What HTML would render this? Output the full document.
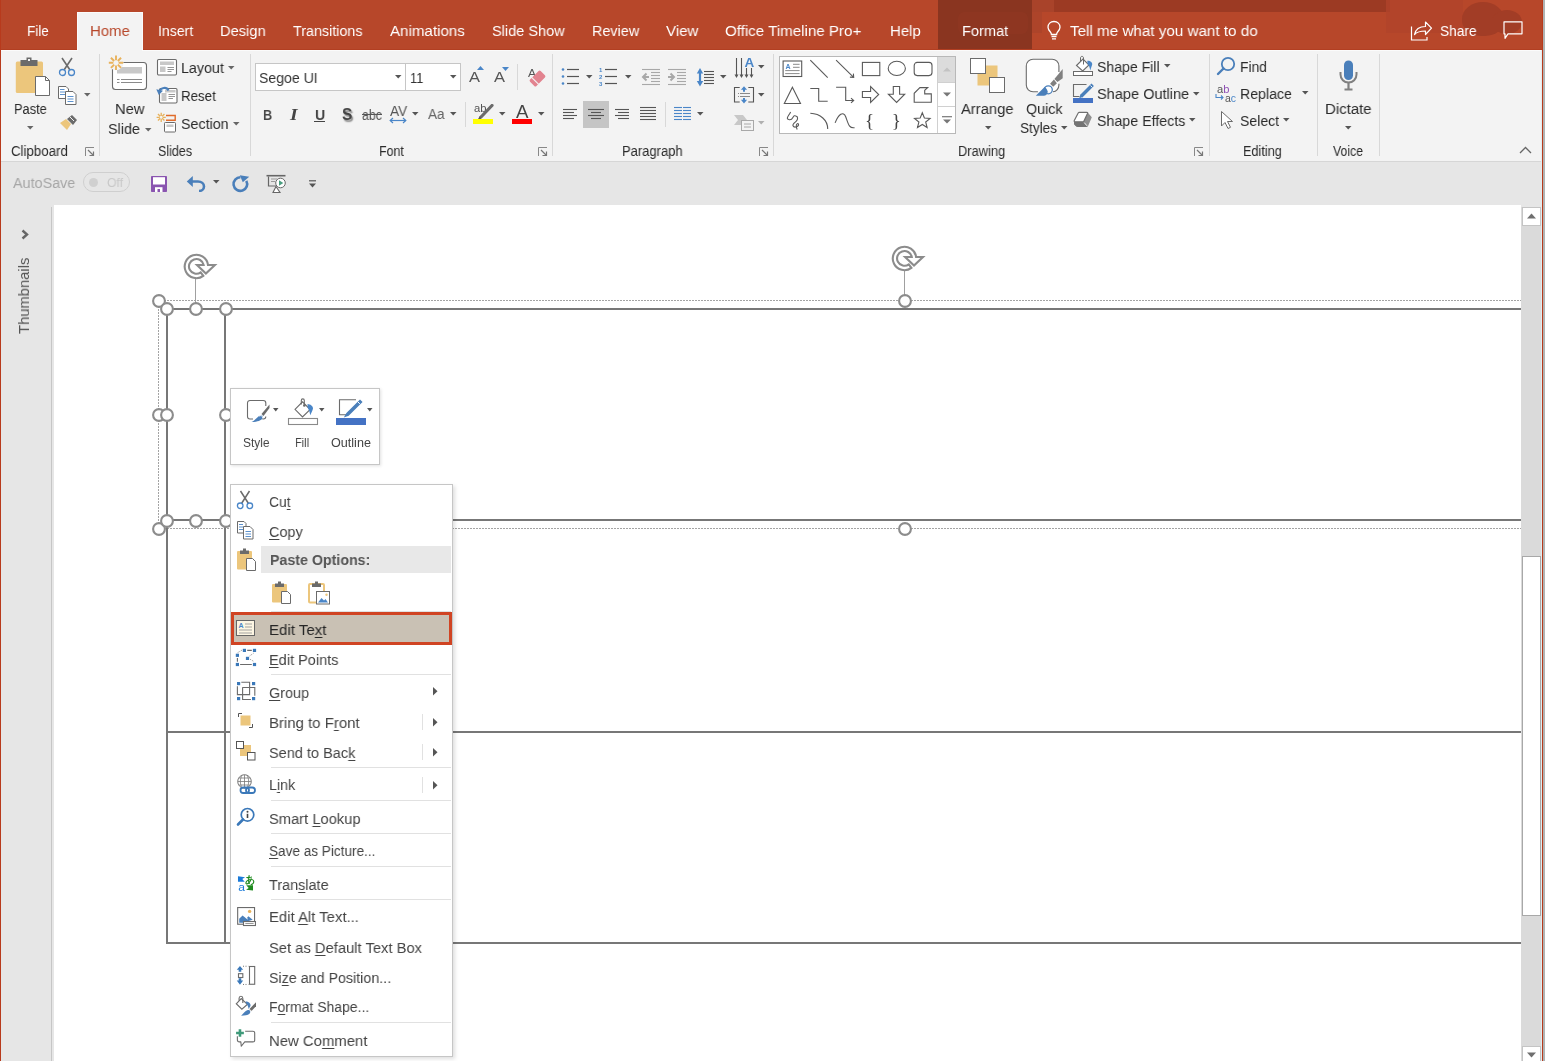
<!DOCTYPE html>
<html><head><meta charset="utf-8">
<style>
*{box-sizing:border-box}
html,body{margin:0;padding:0}
body{width:1545px;height:1061px;overflow:hidden;position:relative;background:#fff;font-family:"Liberation Sans",sans-serif;color:#3b3b3b}
.a{position:absolute;display:block}
.t{position:absolute;white-space:nowrap;line-height:1;will-change:transform}
u{text-decoration:none;border-bottom:1px solid currentColor;display:inline-block;line-height:0.95}
</style></head><body>
<div class="a" style="left:0px;top:0px;width:1545px;height:50px;background:#b7472a;"></div>
<div class="a" style="left:1054px;top:0px;width:336px;height:12px;background:#9c3a23;"></div>
<div class="a" style="left:1032px;top:0px;width:22px;height:12px;background:#a9432a;"></div>
<div class="a" style="left:1032px;top:12px;width:10px;height:21px;background:#ad442a;"></div>
<div class="a" style="left:938px;top:0px;width:94px;height:50px;background:#8a3520;"></div>
<div class="a" style="left:958px;top:12px;width:70px;height:22px;background:#8e3722;border-radius:6px;opacity:.8"></div>
<div class="a" style="left:1386px;top:0px;width:77px;height:33px;background:#b0442a;opacity:.8"></div>
<div class="a" style="left:1462px;top:2px;width:42px;height:34px;background:#a23d26;border-radius:50% 50% 45% 45%"></div>
<div class="a" style="left:1492px;top:10px;width:30px;height:24px;background:#a23d26;border-radius:50%"></div>
<div class="a" style="left:1480px;top:18px;width:30px;height:14px;background:#a23d26;"></div>
<div class="a" style="left:77px;top:12px;width:66px;height:38px;background:#f3f3f3;border:1px solid #fafafa;border-bottom:none"></div>
<div class="t" style="left:26.80px;top:23px;font-size:15.5px;color:#ffffff;transform:scaleX(0.8722);transform-origin:0 0;">File</div>
<div class="t" style="left:89.80px;top:23px;font-size:15.5px;color:#b7472a;transform:scaleX(0.9626);transform-origin:0 0;">Home</div>
<div class="t" style="left:157.60px;top:23px;font-size:15.5px;color:#ffffff;transform:scaleX(0.9084);transform-origin:0 0;">Insert</div>
<div class="t" style="left:220.30px;top:23px;font-size:15.5px;color:#ffffff;transform:scaleX(0.9452);transform-origin:0 0;">Design</div>
<div class="t" style="left:293.40px;top:23px;font-size:15.5px;color:#ffffff;transform:scaleX(0.9240);transform-origin:0 0;">Transitions</div>
<div class="t" style="left:390.20px;top:23px;font-size:15.5px;color:#ffffff;transform:scaleX(0.9754);transform-origin:0 0;">Animations</div>
<div class="t" style="left:492.20px;top:23px;font-size:15.5px;color:#ffffff;transform:scaleX(0.9384);transform-origin:0 0;">Slide Show</div>
<div class="t" style="left:591.80px;top:23px;font-size:15.5px;color:#ffffff;transform:scaleX(0.9277);transform-origin:0 0;">Review</div>
<div class="t" style="left:666.00px;top:23px;font-size:15.5px;color:#ffffff;transform:scaleX(0.9741);transform-origin:0 0;">View</div>
<div class="t" style="left:724.70px;top:23px;font-size:15.5px;color:#ffffff;transform:scaleX(0.9757);transform-origin:0 0;">Office Timeline Pro+</div>
<div class="t" style="left:889.60px;top:23px;font-size:15.5px;color:#ffffff;transform:scaleX(0.9658);transform-origin:0 0;">Help</div>
<div class="t" style="left:961.60px;top:23px;font-size:15.5px;color:#ffffff;transform:scaleX(0.9410);transform-origin:0 0;">Format</div>
<div class="t" style="left:1069.80px;top:23px;font-size:15.5px;color:#ffffff;transform:scaleX(0.9813);transform-origin:0 0;">Tell me what you want to do</div>
<div class="t" style="left:1440.30px;top:23px;font-size:15.5px;color:#ffffff;transform:scaleX(0.8852);transform-origin:0 0;">Share</div>
<svg class="a" style="left:1046px;top:20px;" width="15.5" height="22" viewBox="0 0 15.5 22"><path d="M8 1.5C4.4 1.5 2 4 2 7.2c0 2.2 1.3 3.6 2.4 4.8.7.8 1 1.6 1 2.5h5.2c0-.9.3-1.7 1-2.5 1.1-1.2 2.4-2.6 2.4-4.8C14 4 11.6 1.5 8 1.5z" fill="none" stroke="#fff" stroke-width="1.3"/><path d="M5.5 16.5h5M6 18.8h4" stroke="#fff" stroke-width="1.3"/></svg>
<svg class="a" style="left:1410px;top:20px;" width="23" height="21" viewBox="0 0 23 21"><path d="M1.5 6.5v13.5h15.5v-3" fill="none" stroke="#fff" stroke-width="1.2"/><path d="M4.5 14.5c1-5 5-8 11-8V2l6 6.2-6 6.3V11c-4.5 0-8.5.8-11 3.5z" fill="none" stroke="#fff" stroke-width="1.2" stroke-linejoin="round"/></svg>
<svg class="a" style="left:1503px;top:21px;" width="20" height="19" viewBox="0 0 20 19"><path d="M1 .8h18v12H5l-3 4.5v-4.5H1z" fill="none" stroke="#fff" stroke-width="1.2" stroke-linejoin="round"/></svg>
<div class="a" style="left:0px;top:0px;width:1px;height:1061px;background:#b83a1c;"></div>
<div class="a" style="left:1px;top:50px;width:1541px;height:111px;background:#f3f3f3;"></div>
<div class="a" style="left:1px;top:50px;width:76px;height:1px;background:#fbfbfb;"></div>
<div class="a" style="left:143px;top:50px;width:1398px;height:1px;background:#fbfbfb;"></div>
<div class="a" style="left:1px;top:49px;width:76px;height:1px;background:#b23f22;"></div>
<div class="a" style="left:143px;top:49px;width:1399px;height:1px;background:#b23f22;"></div>
<div class="a" style="left:77px;top:12px;width:66px;height:39px;background:#f3f3f3;border:1px solid #fbfbfb;border-bottom:none"></div>
<div class="t" style="left:89.80px;top:23px;font-size:15.5px;color:#b7472a;transform:scaleX(0.9626);transform-origin:0 0;">Home</div>
<div class="a" style="left:1px;top:161px;width:1541px;height:1px;background:#d6d6d6;"></div>
<div class="a" style="left:99px;top:54px;width:1px;height:102px;background:#d8d8d8;"></div>
<div class="a" style="left:250px;top:54px;width:1px;height:102px;background:#d8d8d8;"></div>
<div class="a" style="left:552px;top:54px;width:1px;height:102px;background:#d8d8d8;"></div>
<div class="a" style="left:773px;top:54px;width:1px;height:102px;background:#d8d8d8;"></div>
<div class="a" style="left:1209px;top:54px;width:1px;height:102px;background:#d8d8d8;"></div>
<div class="a" style="left:1317px;top:54px;width:1px;height:102px;background:#d8d8d8;"></div>
<div class="a" style="left:1379px;top:54px;width:1px;height:102px;background:#d8d8d8;"></div>
<div class="t" style="left:11.40px;top:144px;font-size:14px;color:#2b2b2b;transform:scaleX(0.9479);transform-origin:0 0;">Clipboard</div>
<div class="t" style="left:158.00px;top:144px;font-size:14px;color:#2b2b2b;transform:scaleX(0.8920);transform-origin:0 0;">Slides</div>
<div class="t" style="left:379.10px;top:144px;font-size:14px;color:#2b2b2b;transform:scaleX(0.8893);transform-origin:0 0;">Font</div>
<div class="t" style="left:622.00px;top:144px;font-size:14px;color:#2b2b2b;transform:scaleX(0.9284);transform-origin:0 0;">Paragraph</div>
<div class="t" style="left:957.70px;top:144px;font-size:14px;color:#2b2b2b;transform:scaleX(0.9212);transform-origin:0 0;">Drawing</div>
<div class="t" style="left:1243.40px;top:144px;font-size:14px;color:#2b2b2b;transform:scaleX(0.9064);transform-origin:0 0;">Editing</div>
<div class="t" style="left:1333.30px;top:144px;font-size:14px;color:#2b2b2b;transform:scaleX(0.8755);transform-origin:0 0;">Voice</div>
<svg class="a" style="left:85px;top:147px;" width="10" height="10" viewBox="0 0 10 10"><path d="M.5 9V.5H9" fill="none" stroke="#888" stroke-width="1"/><path d="M3 3l5.5 5.5M4.5 8.5h4v-4" fill="none" stroke="#777" stroke-width="1.2"/></svg>
<svg class="a" style="left:538px;top:147px;" width="10" height="10" viewBox="0 0 10 10"><path d="M.5 9V.5H9" fill="none" stroke="#888" stroke-width="1"/><path d="M3 3l5.5 5.5M4.5 8.5h4v-4" fill="none" stroke="#777" stroke-width="1.2"/></svg>
<svg class="a" style="left:759px;top:147px;" width="10" height="10" viewBox="0 0 10 10"><path d="M.5 9V.5H9" fill="none" stroke="#888" stroke-width="1"/><path d="M3 3l5.5 5.5M4.5 8.5h4v-4" fill="none" stroke="#777" stroke-width="1.2"/></svg>
<svg class="a" style="left:1194px;top:147px;" width="10" height="10" viewBox="0 0 10 10"><path d="M.5 9V.5H9" fill="none" stroke="#888" stroke-width="1"/><path d="M3 3l5.5 5.5M4.5 8.5h4v-4" fill="none" stroke="#777" stroke-width="1.2"/></svg>
<svg class="a" style="left:14px;top:57px;" width="38" height="40" viewBox="0 0 38 40"><rect x="1.8" y="4.5" width="27.2" height="31.5" rx="1.5" fill="#ecc67c"/><path d="M6.5 3h17v6h-17z" fill="#6b6b6b"/><rect x="12.5" y="0.5" width="5" height="4" fill="#6b6b6b"/><rect x="14" y="2" width="2" height="2" fill="#f3f3f3"/><path d="M21.5 19.5h10l4 4v15h-14z" fill="#fff" stroke="#6b6b6b" stroke-width="1"/><path d="M31.5 19.5v4h4" fill="none" stroke="#6b6b6b"/></svg>
<div class="t" style="left:13.50px;top:101px;font-size:15.5px;color:#2b2b2b;transform:scaleX(0.8274);transform-origin:0 0;">Paste</div>
<svg class="a" style="left:26.75px;top:126.20px" width="7.5" height="4.6" viewBox="0 0 7.5 4.6"><path d="M0 0H6.5L3.25 3.6Z" fill="#666"/></svg>
<svg class="a" style="left:58px;top:57px;" width="18" height="20" viewBox="0 0 18 20"><path d="M4 1l8 12M14 1L6 13" stroke="#6b6b6b" stroke-width="1.6"/><circle cx="4.5" cy="15.5" r="3" fill="none" stroke="#4a86c8" stroke-width="1.3"/><circle cx="13.5" cy="15.5" r="3" fill="none" stroke="#4a86c8" stroke-width="1.3"/></svg>
<svg class="a" style="left:58px;top:85px;" width="19" height="20" viewBox="0 0 19 20"><path d="M.5 1.5h7.5l2.5 2.5v9.5h-10z" fill="#fff" stroke="#6b6b6b"/><path d="M7.5 6.5h7.5l3 3v10h-10.5z" fill="#fff" stroke="#6b6b6b"/><path d="M2 4.5h4.5M2 7h5M2 9.5h5M9.5 11.5h6M9.5 14h6M9.5 16.5h6" stroke="#4a86c8" stroke-width=".9"/></svg>
<svg class="a" style="left:83.75px;top:93.20px" width="7.5" height="4.6" viewBox="0 0 7.5 4.6"><path d="M0 0H6.5L3.25 3.6Z" fill="#666"/></svg>
<svg class="a" style="left:59px;top:114px;" width="19" height="17" viewBox="0 0 19 17"><path d="M1 9l6-4 5 5-4 6z" fill="#ecc67c"/><path d="M8 5l5-4 5 5-4 5z" fill="#6b6b6b"/><path d="M11 3l4 4" stroke="#f3f3f3" stroke-width="1"/></svg>
<svg class="a" style="left:107px;top:54px;" width="42" height="38" viewBox="0 0 42 38"><rect x="5.5" y="8.5" width="34" height="27" rx="3" fill="#fff" stroke="#6b6b6b" stroke-width="1.1"/><rect x="10" y="13" width="25" height="6.5" fill="#c8c8c8"/><path d="M10 25.5h2.5M14 25.5h21M10 28.5h2.5M14 28.5h21" stroke="#8a8a8a" stroke-width="1"/><circle cx="9" cy="8.8" r="7.5" fill="#f3f3f3"/><path d="M11.60 8.80L16.20 8.80M10.84 10.64L14.09 13.89M9.00 11.40L9.00 16.00M7.16 10.64L3.91 13.89M6.40 8.80L1.80 8.80M7.16 6.96L3.91 3.71M9.00 6.20L9.00 1.60M10.84 6.96L14.09 3.71" stroke="#e8b25c" stroke-width="1.9"/></svg>
<div class="t" style="left:114.50px;top:101px;font-size:15.5px;color:#2b2b2b;transform:scaleX(0.9504);transform-origin:0 0;">New</div>
<div class="t" style="left:107.70px;top:121px;font-size:15.5px;color:#2b2b2b;transform:scaleX(0.9289);transform-origin:0 0;">Slide</div>
<svg class="a" style="left:144.75px;top:128.20px" width="7.5" height="4.6" viewBox="0 0 7.5 4.6"><path d="M0 0H6.5L3.25 3.6Z" fill="#666"/></svg>
<svg class="a" style="left:156px;top:58px;" width="22" height="19" viewBox="0 0 22 19"><rect x="1.5" y="1.5" width="19" height="15.5" rx="1.2" fill="#fff" stroke="#6b6b6b" stroke-width="1.1"/><rect x="4" y="3.5" width="14" height="3.5" fill="#c8c8c8"/><rect x="4" y="8.5" width="5.5" height="5.5" fill="#c8c8c8"/><path d="M11.5 9.5h6.5M11.5 11.5h6.5M11.5 13.5h4" stroke="#8a8a8a" stroke-width=".9"/></svg>
<div class="t" style="left:181.00px;top:60px;font-size:15.5px;color:#2b2b2b;transform:scaleX(0.9218);transform-origin:0 0;">Layout</div>
<svg class="a" style="left:227.75px;top:66.20px" width="7.5" height="4.6" viewBox="0 0 7.5 4.6"><path d="M0 0H6.5L3.25 3.6Z" fill="#666"/></svg>
<svg class="a" style="left:156px;top:84px;" width="22" height="20" viewBox="0 0 22 20"><rect x="3.5" y="4.5" width="17.5" height="14.5" rx="1.2" fill="#fff" stroke="#6b6b6b" stroke-width="1.1"/><rect x="5.5" y="9" width="5" height="8" fill="#c8c8c8"/><path d="M12.5 10.5h6.5M12.5 12.5h6.5M12.5 14.5h4.5" stroke="#8a8a8a" stroke-width=".9"/><rect x="9" y="6" width="10.5" height="2.5" fill="#c8c8c8"/><path d="M3.5 7.5C5 3.5 10.5 2.5 12.5 6.5" fill="none" stroke="#4a7fba" stroke-width="2.2"/><path d="M0.3 5.3L2.8 11 7 6.8z" fill="#4a7fba"/></svg>
<div class="t" style="left:181.00px;top:88px;font-size:15.5px;color:#2b2b2b;transform:scaleX(0.8594);transform-origin:0 0;">Reset</div>
<svg class="a" style="left:155px;top:112px;" width="23" height="21" viewBox="0 0 23 21"><path d="M7.60 5.30L10.80 5.30M7.19 6.29L9.45 8.55M6.20 6.70L6.20 9.90M5.21 6.29L2.95 8.55M4.80 5.30L1.60 5.30M5.21 4.31L2.95 2.05M6.20 3.90L6.20 0.70M7.19 4.31L9.45 2.05" stroke="#e8b25c" stroke-width="1.3"/><path d="M11 3.5h9.2v4.8H11" fill="none" stroke="#e06b2a" stroke-width="1.4"/><rect x="9.5" y="10.5" width="11" height="9.5" rx=".8" fill="#fff" stroke="#6b6b6b" stroke-width="1"/><rect x="11.5" y="12.5" width="7" height="2.5" fill="#c8c8c8"/></svg>
<div class="t" style="left:181.00px;top:116px;font-size:15.5px;color:#2b2b2b;transform:scaleX(0.9208);transform-origin:0 0;">Section</div>
<svg class="a" style="left:233.25px;top:121.70px" width="7.5" height="4.6" viewBox="0 0 7.5 4.6"><path d="M0 0H6.5L3.25 3.6Z" fill="#666"/></svg>
<div class="a" style="left:255px;top:63px;width:151px;height:28px;background:#fff;border:1px solid #c6c6c6"></div>
<div class="a" style="left:405px;top:63px;width:56px;height:28px;background:#fff;border:1px solid #c6c6c6"></div>
<div class="t" style="left:258.50px;top:70px;font-size:15.5px;color:#333;transform:scaleX(0.9082);transform-origin:0 0;">Segoe UI</div>
<div class="t" style="left:410.30px;top:70px;font-size:15.5px;color:#333;transform:scaleX(0.8271);transform-origin:0 0;">11</div>
<svg class="a" style="left:394.75px;top:75.20px" width="7.5" height="4.6" viewBox="0 0 7.5 4.6"><path d="M0 0H6.5L3.25 3.6Z" fill="#555"/></svg>
<svg class="a" style="left:449.75px;top:75.20px" width="7.5" height="4.6" viewBox="0 0 7.5 4.6"><path d="M0 0H6.5L3.25 3.6Z" fill="#555"/></svg>
<div class="t" style="left:469.00px;top:69px;font-size:15.5px;color:#555;transform:scaleX(1.0632);transform-origin:0 0;">A</div>
<svg class="a" style="left:477px;top:66px;" width="7" height="4" viewBox="0 0 7 4"><path d="M0 4L3.5 0 7 4z" fill="#4a86c8"/></svg>
<div class="t" style="left:494.00px;top:69px;font-size:15.5px;color:#555;transform:scaleX(1.0632);transform-origin:0 0;">A</div>
<svg class="a" style="left:502px;top:67px;" width="7" height="4" viewBox="0 0 7 4"><path d="M0 0h7L3.5 4z" fill="#4a86c8"/></svg>
<div class="a" style="left:517px;top:64px;width:1px;height:26px;background:#d8d8d8;"></div>
<div class="t" style="left:527.50px;top:68px;font-size:11px;color:#555;transform:scaleX(1.0895);transform-origin:0 0;">A</div>
<svg class="a" style="left:527px;top:68px;" width="20" height="20" viewBox="0 0 20 20"><g transform="rotate(-45 10.5 10.5)"><rect x="3" y="6" width="15" height="9" rx="1.5" fill="#e2838f"/><path d="M7.2 5.5v10" stroke="#f3f3f3" stroke-width="1.1"/></g></svg>
<div class="t" style="left:262.60px;top:107px;font-size:15.5px;color:#444;transform:scaleX(0.8215);transform-origin:0 0;font-weight:bold;">B</div>
<div class="t" style="left:290px;top:105.5px;font-size:17px;color:#444;font-family:'Liberation Serif';font-style:italic;font-weight:bold;transform:scaleX(1.15);transform-origin:0 0;">I</div>
<div class="t" style="left:314.60px;top:107px;font-size:15.5px;color:#444;transform:scaleX(0.9108);transform-origin:0 0;font-weight:bold;">U</div>
<div class="a" style="left:314px;top:121px;width:11px;height:1.3px;background:#444;"></div>
<div class="t" style="left:341.70px;top:106px;font-size:17px;color:#444;text-shadow:1.5px 1.5px 1.5px rgba(0,0,0,.45);transform:scaleX(0.9077);transform-origin:0 0;font-weight:bold;">S</div>
<div class="t" style="left:362.00px;top:108px;font-size:14px;color:#555;transform:scaleX(0.8859);transform-origin:0 0;">abc</div>
<div class="a" style="left:362px;top:114px;width:20px;height:1.3px;background:#555;"></div>
<div class="t" style="left:389.50px;top:104px;font-size:14px;color:#555;transform:scaleX(0.9751);transform-origin:0 0;">AV</div>
<svg class="a" style="left:389px;top:117px;" width="18" height="7" viewBox="0 0 18 7"><path d="M1.5 3.5h15" stroke="#4a86c8" stroke-width="1.2"/><path d="M4 1L1.2 3.5 4 6M14 1l2.8 2.5L14 6" fill="none" stroke="#4a86c8" stroke-width="1.2"/></svg>
<svg class="a" style="left:411.75px;top:112.20px" width="7.5" height="4.6" viewBox="0 0 7.5 4.6"><path d="M0 0H6.5L3.25 3.6Z" fill="#555"/></svg>
<div class="t" style="left:428.00px;top:106px;font-size:15.5px;color:#666;transform:scaleX(0.8743);transform-origin:0 0;">Aa</div>
<svg class="a" style="left:449.75px;top:112.20px" width="7.5" height="4.6" viewBox="0 0 7.5 4.6"><path d="M0 0H6.5L3.25 3.6Z" fill="#555"/></svg>
<div class="a" style="left:465px;top:102px;width:1px;height:25px;background:#d8d8d8;"></div>
<div class="t" style="left:473.50px;top:103px;font-size:11px;color:#555;transform:scaleX(1.0215);transform-origin:0 0;">ab</div>
<svg class="a" style="left:476px;top:104px;" width="18" height="15.5" viewBox="0 0 18 15.5"><path d="M16 1.5L5 13" stroke="#6b6b6b" stroke-width="3.2" stroke-linecap="round"/><path d="M4 12l-2 3h3z" fill="#555"/></svg>
<div class="a" style="left:473px;top:119px;width:20px;height:5px;background:#ffff00;"></div>
<svg class="a" style="left:498.75px;top:112.20px" width="7.5" height="4.6" viewBox="0 0 7.5 4.6"><path d="M0 0H6.5L3.25 3.6Z" fill="#555"/></svg>
<div class="t" style="left:515.70px;top:103px;font-size:18px;color:#444;transform:scaleX(1.0404);transform-origin:0 0;">A</div>
<div class="a" style="left:512px;top:119px;width:20px;height:5px;background:#ff0000;"></div>
<svg class="a" style="left:537.75px;top:112.20px" width="7.5" height="4.6" viewBox="0 0 7.5 4.6"><path d="M0 0H6.5L3.25 3.6Z" fill="#555"/></svg>
<svg class="a" style="left:560px;top:66px;" width="22" height="20" viewBox="0 0 22 20"><circle cx="3" cy="3.5" r="1.3" fill="#4a86c8"/><circle cx="3" cy="10.5" r="1.3" fill="#4a86c8"/><circle cx="3" cy="17.5" r="1.3" fill="#4a86c8"/><path d="M7 3.5h12" stroke="#555" stroke-width="1.2"/><path d="M7 10.5h12" stroke="#555" stroke-width="1.2"/><path d="M7 17.5h12" stroke="#555" stroke-width="1.2"/></svg>
<svg class="a" style="left:585.75px;top:75.20px" width="7.5" height="4.6" viewBox="0 0 7.5 4.6"><path d="M0 0H6.5L3.25 3.6Z" fill="#555"/></svg>
<svg class="a" style="left:598px;top:66px;" width="22" height="20" viewBox="0 0 22 20"><text x="1" y="6" font-size="6" fill="#4a86c8" font-family="Liberation Sans" font-weight="bold">1</text><text x="1" y="13" font-size="6" fill="#4a86c8" font-family="Liberation Sans" font-weight="bold">2</text><text x="1" y="20" font-size="6" fill="#4a86c8" font-family="Liberation Sans" font-weight="bold">3</text><path d="M7 3.5h12" stroke="#555" stroke-width="1.2"/><path d="M7 10.5h12" stroke="#555" stroke-width="1.2"/><path d="M7 17.5h12" stroke="#555" stroke-width="1.2"/></svg>
<svg class="a" style="left:624.75px;top:75.20px" width="7.5" height="4.6" viewBox="0 0 7.5 4.6"><path d="M0 0H6.5L3.25 3.6Z" fill="#555"/></svg>
<svg class="a" style="left:0px;top:0px;" width="730" height="95" viewBox="0 0 730 95"><path d="M642 69.5H660" stroke="#a8a8a8" stroke-width="1.1"/><path d="M668 69.5H686" stroke="#a8a8a8" stroke-width="1.1"/><path d="M642 84.5H660" stroke="#a8a8a8" stroke-width="1.1"/><path d="M668 84.5H686" stroke="#a8a8a8" stroke-width="1.1"/><path d="M651 72.5H660" stroke="#a8a8a8" stroke-width="1.1"/><path d="M677 72.5H686" stroke="#a8a8a8" stroke-width="1.1"/><path d="M651 75.5H660" stroke="#a8a8a8" stroke-width="1.1"/><path d="M677 75.5H686" stroke="#a8a8a8" stroke-width="1.1"/><path d="M651 78.5H660" stroke="#a8a8a8" stroke-width="1.1"/><path d="M677 78.5H686" stroke="#a8a8a8" stroke-width="1.1"/><path d="M651 81.5H660" stroke="#a8a8a8" stroke-width="1.1"/><path d="M677 81.5H686" stroke="#a8a8a8" stroke-width="1.1"/><path d="M649 77H643.5M646.5 73.5L643 77l3.5 3.5" fill="none" stroke="#a8a8a8" stroke-width="2"/><path d="M668 77h5.5M670.5 73.5L674 77l-3.5 3.5" fill="none" stroke="#a8a8a8" stroke-width="2"/><path d="M700 71.5V83" stroke="#4a86c8" stroke-width="2.2"/><path d="M696.8 73.5L700 68l3.2 5.5zM696.8 81L700 86.5l3.2-5.5z" fill="#4a86c8"/><path d="M704 71.5H714" stroke="#555" stroke-width="1.1"/><path d="M704 74.5H714" stroke="#555" stroke-width="1.1"/><path d="M704 77.5H714" stroke="#555" stroke-width="1.1"/><path d="M704 80.5H714" stroke="#555" stroke-width="1.1"/><path d="M704 83.5H714" stroke="#555" stroke-width="1.1"/></svg>
<svg class="a" style="left:719.75px;top:75.20px" width="7.5" height="4.6" viewBox="0 0 7.5 4.6"><path d="M0 0H6.5L3.25 3.6Z" fill="#555"/></svg>
<svg class="a" style="left:0px;top:0px;" width="775" height="135" viewBox="0 0 775 135"><path d="M736.5 58V75" stroke="#555" stroke-width="1.1"/><path d="M734.5 74.5L736.5 78L738.5 74.5z" fill="#555"/><path d="M741.5 58V75" stroke="#555" stroke-width="1.1"/><path d="M739.5 74.5L741.5 78L743.5 74.5z" fill="#555"/><path d="M746.5 68V75" stroke="#555" stroke-width="1.1"/><path d="M744.5 74.5L746.5 78L748.5 74.5z" fill="#555"/><path d="M751.5 68V75" stroke="#555" stroke-width="1.1"/><path d="M749.5 74.5L751.5 78L753.5 74.5z" fill="#555"/><text x="744.6" y="67" font-size="13.5" font-weight="bold" fill="#4a86c8" font-family="Liberation Sans">A</text></svg>
<svg class="a" style="left:757.75px;top:65.20px" width="7.5" height="4.6" viewBox="0 0 7.5 4.6"><path d="M0 0H6.5L3.25 3.6Z" fill="#555"/></svg>
<svg class="a" style="left:0px;top:0px;" width="775" height="135" viewBox="0 0 775 135"><path d="M739.7 87.5H734.5V102H739.7M748.3 87.5H753.5V102H748.3" fill="none" stroke="#555" stroke-width="1.1"/><path d="M740 93.5H750M740 96.5H750" stroke="#8a8a8a" stroke-width="1"/><path d="M738 93.5h1M738 96.5h1" stroke="#8a8a8a" stroke-width="1"/><path d="M744 89V91.8M744 98V100.8" stroke="#4a86c8" stroke-width="2"/><path d="M740.9 89.8L744 86.2L747.1 89.8zM740.9 99.8L744 103.4L747.1 99.8z" fill="#4a86c8"/></svg>
<svg class="a" style="left:757.75px;top:93.20px" width="7.5" height="4.6" viewBox="0 0 7.5 4.6"><path d="M0 0H6.5L3.25 3.6Z" fill="#555"/></svg>
<svg class="a" style="left:733px;top:114px;" width="22" height="18" viewBox="0 0 22 18"><path d="M1 1h9l4 5-4 5H1l4-5z" fill="#c8c8c8"/><rect x="8.5" y="6.5" width="12" height="10" fill="#f3f3f3" stroke="#a8a8a8"/><path d="M11 10h7M11 13h7" stroke="#a8a8a8"/></svg>
<svg class="a" style="left:757.75px;top:121.20px" width="7.5" height="4.6" viewBox="0 0 7.5 4.6"><path d="M0 0H6.5L3.25 3.6Z" fill="#b0b0b0"/></svg>
<svg class="a" style="left:0px;top:0px;" width="720" height="130" viewBox="0 0 720 130"><path d="M563 109.5H577" stroke="#555" stroke-width="1.1"/><path d="M563 112.5H574" stroke="#555" stroke-width="1.1"/><path d="M563 115.5H577" stroke="#555" stroke-width="1.1"/><path d="M563 118.5H574" stroke="#555" stroke-width="1.1"/></svg>
<div class="a" style="left:583px;top:101px;width:26px;height:27px;background:#c5c5c5;"></div>
<svg class="a" style="left:0px;top:0px;" width="720" height="130" viewBox="0 0 720 130"><path d="M588 109.5H604" stroke="#555" stroke-width="1.1"/><path d="M591 112.5H601" stroke="#555" stroke-width="1.1"/><path d="M588 115.5H604" stroke="#555" stroke-width="1.1"/><path d="M591 118.5H601" stroke="#555" stroke-width="1.1"/><path d="M615 109.5H629" stroke="#555" stroke-width="1.1"/><path d="M618 112.5H629" stroke="#555" stroke-width="1.1"/><path d="M615 115.5H629" stroke="#555" stroke-width="1.1"/><path d="M618 118.5H629" stroke="#555" stroke-width="1.1"/><path d="M640 107.5H656" stroke="#555" stroke-width="1.1"/><path d="M640 110.5H656" stroke="#555" stroke-width="1.1"/><path d="M640 113.5H656" stroke="#555" stroke-width="1.1"/><path d="M640 116.5H656" stroke="#555" stroke-width="1.1"/><path d="M640 119.5H656" stroke="#555" stroke-width="1.1"/><path d="M674 107.5H682" stroke="#4a86c8" stroke-width="1.1"/><path d="M674 110.5H682" stroke="#4a86c8" stroke-width="1.1"/><path d="M674 113.5H682" stroke="#4a86c8" stroke-width="1.1"/><path d="M674 116.5H682" stroke="#4a86c8" stroke-width="1.1"/><path d="M674 119.5H682" stroke="#4a86c8" stroke-width="1.1"/><path d="M683 107.5H691" stroke="#4a86c8" stroke-width="1.1"/><path d="M683 110.5H691" stroke="#4a86c8" stroke-width="1.1"/><path d="M683 113.5H691" stroke="#4a86c8" stroke-width="1.1"/><path d="M683 116.5H691" stroke="#4a86c8" stroke-width="1.1"/><path d="M683 119.5H691" stroke="#4a86c8" stroke-width="1.1"/></svg>
<div class="a" style="left:665px;top:102px;width:1px;height:25px;background:#d8d8d8;"></div>
<svg class="a" style="left:696.75px;top:112.20px" width="7.5" height="4.6" viewBox="0 0 7.5 4.6"><path d="M0 0H6.5L3.25 3.6Z" fill="#555"/></svg>
<div class="a" style="left:779px;top:56px;width:177px;height:78px;background:#fff;border:1px solid #b8b8b8"></div>
<div class="a" style="left:938px;top:57px;width:17px;height:26px;background:#dcdcdc;"></div>
<div class="a" style="left:937px;top:57px;width:1px;height:76px;background:#d0d0d0;"></div>
<div class="a" style="left:938px;top:82px;width:17px;height:1px;background:#d0d0d0;"></div>
<div class="a" style="left:938px;top:106px;width:17px;height:1px;background:#d0d0d0;"></div>
<svg class="a" style="left:943px;top:67px;" width="8" height="5" viewBox="0 0 8 5"><path d="M0 4.5L4 .5 8 4.5z" fill="#c3c3c3"/></svg>
<svg class="a" style="left:943px;top:92px;" width="8" height="5" viewBox="0 0 8 5"><path d="M0 .5h8L4 4.5z" fill="#777"/></svg>
<svg class="a" style="left:942px;top:116px;" width="10" height="9" viewBox="0 0 10 9"><path d="M0 .7h10" stroke="#777" stroke-width="1.2"/><path d="M1 3.5h8L5 7.5z" fill="#777"/></svg>
<svg class="a" style="left:779px;top:56px;" width="177" height="78" viewBox="0 0 177 78"><rect x="4.1" y="5.0" width="18.6" height="15.5" stroke="#5a5a5a" stroke-width="1.1" fill="none" stroke-width="1.3"/><text x="6.5" y="12.8" font-size="7" font-weight="bold" fill="#4a86c8" font-family="Liberation Sans">A</text><path d="M14.0 8.3 20.6 8.3M14.0 11.3 20.6 11.3M6.2 14.6 20.6 14.6M6.2 17.6 20.6 17.6" stroke="#8a8a8a" stroke-width="1"/><path d="M31.3 4.1 48.7 21.7" stroke="#5a5a5a" stroke-width="1.1" fill="none"/><path d="M57.1 4.1 74.4 21.1M70.9 21.1 74.7 21.4 74.4 17.6" stroke="#5a5a5a" stroke-width="1.1" fill="none"/><rect x="83.4" y="6.4" width="17.4" height="13.2" stroke="#5a5a5a" stroke-width="1.1" fill="none"/><ellipse cx="117.8" cy="12.4" rx="8.6" ry="7.1" stroke="#5a5a5a" stroke-width="1.1" fill="none"/><rect x="135.2" y="6.4" width="17.8" height="13.2" rx="3" stroke="#5a5a5a" stroke-width="1.1" fill="none"/><path d="M5.3 47.5 13.4 31.3 21.5 47.5Z" stroke="#5a5a5a" stroke-width="1.1" fill="none"/><path d="M31.3 32.5 39.7 32.5 39.7 45.3 48.7 45.3" stroke="#5a5a5a" stroke-width="1.1" fill="none"/><path d="M57.1 31.3 66.7 31.3 66.7 44.5 74.4 44.5M72.0 42.1 74.7 44.5 72.0 46.9" stroke="#5a5a5a" stroke-width="1.1" fill="none"/><path d="M83.4 35.5 91.6 35.5 91.6 30.5 99.7 38.5 91.6 46.5 91.6 41.5 83.4 41.5Z" stroke="#5a5a5a" stroke-width="1.1" fill="none"/><path d="M114.3 30.5 120.6 30.5 120.6 38.2 125.7 38.2 117.6 46.5 109.4 38.2 114.3 38.2Z" stroke="#5a5a5a" stroke-width="1.1" fill="none"/><path d="M140.9 31.6 148.7 31.6 145.7 34.3 145.7 37.9 152.3 37.9 152.3 46.3 135.2 46.3 135.2 37.3Z" stroke="#5a5a5a" stroke-width="1.1" fill="none"/><path d="M11.6 55.9C9.2 60.7 6.2 63.1 10.4 63.7 15.2 64.3 12.8 57.1 18.2 60.7 20.6 65.5 12.8 66.7 14.0 69.7 15.2 72.6 20.6 70.3 19.4 67.9 18.2 66.7 15.8 69.1 18.2 73.6" stroke="#5a5a5a" stroke-width="1.1" fill="none"/><path d="M31.3 57.3C41.5 57.7 48.7 64.3 48.7 72.9" stroke="#5a5a5a" stroke-width="1.1" fill="none"/><path d="M56.1 66.9C59.5 58.3 64.3 54.7 66.7 60.7 69.7 69.1 70.3 72.6 75.6 71.7" stroke="#5a5a5a" stroke-width="1.1" fill="none"/><text x="86.1" y="71.4" font-size="19" fill="#444" font-family="Liberation Serif">{</text><text x="112.8" y="71.4" font-size="19" fill="#444" font-family="Liberation Serif">}</text><path d="M143.3 56.7 L145.4 62.0 L151.1 62.4 L146.7 66.0 L148.1 71.5 L143.3 68.5 L138.5 71.5 L139.9 66.0 L135.5 62.4 L141.2 62.0Z" stroke="#5a5a5a" stroke-width="1.1" fill="none"/></svg>
<svg class="a" style="left:969px;top:57px;" width="37" height="37" viewBox="0 0 37 37"><rect x="8.5" y="8.5" width="20" height="20" fill="#ecc67c"/><rect x="1.5" y="1.5" width="15" height="15" fill="#fff" stroke="#6b6b6b" stroke-width="1"/><rect x="20.5" y="20.5" width="15" height="15" fill="#fff" stroke="#6b6b6b" stroke-width="1"/></svg>
<div class="t" style="left:961.40px;top:101px;font-size:15.5px;color:#2b2b2b;transform:scaleX(0.9521);transform-origin:0 0;">Arrange</div>
<svg class="a" style="left:984.75px;top:126.20px" width="7.5" height="4.6" viewBox="0 0 7.5 4.6"><path d="M0 0H6.5L3.25 3.6Z" fill="#555"/></svg>
<svg class="a" style="left:1025px;top:58px;" width="42" height="40" viewBox="0 0 42 40"><rect x="1.3" y="1.2" width="32.6" height="32.6" rx="6.8" fill="#fff"/><path d="M33.9 13.9V8a6.8 6.8 0 0 0-6.8-6.8H8.1A6.8 6.8 0 0 0 1.3 8v19a6.8 6.8 0 0 0 6.8 6.8h4.8M28 33.8a6.8 6.8 0 0 0 5.9-6.8v-1.3" fill="none" stroke="#6b6b6b" stroke-width="1.1"/><path d="M37.7 11V20.2L32.5 24.1 29.4 20.9z" fill="#808080"/><path d="M28.9 21.6L31.9 25.2 28.2 28.8 25.1 25.7z" fill="#808080"/><path d="M10.8 37.7L19.8 28.8c1.5 1.5 2.5 3 2.8 4.5.3 2-1 4.2-3.5 4.4z" fill="#4a7fba"/><circle cx="23.3" cy="31.8" r="4" fill="none" stroke="#4a7fba" stroke-width="1.3"/></svg>
<div class="t" style="left:1025.70px;top:101px;font-size:15.5px;color:#2b2b2b;transform:scaleX(0.9258);transform-origin:0 0;">Quick</div>
<div class="t" style="left:1019.90px;top:120px;font-size:15.5px;color:#2b2b2b;transform:scaleX(0.8744);transform-origin:0 0;">Styles</div>
<svg class="a" style="left:1060.75px;top:126.20px" width="7.5" height="4.6" viewBox="0 0 7.5 4.6"><path d="M0 0H6.5L3.25 3.6Z" fill="#555"/></svg>
<svg class="a" style="left:1072px;top:55px;" width="22" height="22" viewBox="0 0 22 22"><rect x="1.5" y="16.5" width="19" height="4" fill="#fff" stroke="#6b6b6b" stroke-width="1"/><path d="M4.5 10.5l6.5-6.5 6 6-6.3 6z" fill="#fff" stroke="#6b6b6b" stroke-width="1.1"/><path d="M11.5 9.5V3c0-2.2-3-2.2-3 0v3" fill="none" stroke="#6b6b6b" stroke-width="1"/><path d="M15.3 5.7C18.5 5.5 20.5 7.5 20.2 9.5L18.2 15.4C17.8 12.5 17 10.5 15.5 8.8z" fill="#4a86c8"/></svg>
<div class="t" style="left:1096.60px;top:59px;font-size:15.5px;color:#2b2b2b;transform:scaleX(0.9081);transform-origin:0 0;">Shape Fill</div>
<svg class="a" style="left:1163.75px;top:64.20px" width="7.5" height="4.6" viewBox="0 0 7.5 4.6"><path d="M0 0H6.5L3.25 3.6Z" fill="#555"/></svg>
<svg class="a" style="left:1072px;top:83px;" width="22" height="21" viewBox="0 0 22 21"><path d="M14.5 1.5H1.5v12h6" fill="none" stroke="#6b6b6b" stroke-width="1.1"/><path d="M20.7 1.8L9.2 13.2" stroke="#4a7fba" stroke-width="3.4"/><path d="M7.3 15.2l1.2-3.6 2.4 2.4z" fill="#4a7fba"/><path d="M18.5 2.5l1.8 1.8" stroke="#fff" stroke-width=".9"/><rect x="1" y="15" width="20" height="5" fill="#4472c4"/></svg>
<div class="t" style="left:1096.60px;top:86px;font-size:15.5px;color:#2b2b2b;transform:scaleX(0.9386);transform-origin:0 0;">Shape Outline</div>
<svg class="a" style="left:1192.75px;top:92.20px" width="7.5" height="4.6" viewBox="0 0 7.5 4.6"><path d="M0 0H6.5L3.25 3.6Z" fill="#555"/></svg>
<svg class="a" style="left:1068px;top:106px;" width="30" height="28" viewBox="0 0 30 28"><path d="M19.5 6.3L23.8 11.2 20.2 19.8c-.4 1-1 1.2-1.8 1.2H10c-1 0-1.8-.4-2.6-1.2L6 18.2V16z" fill="#8f8f8f"/><path d="M6.2 15.8H15.6L19.2 20.9H10.2c-1 0-1.8-.4-2.6-1.2L6 18z" fill="#737373"/><path d="M11.2 6.3H18.8c.8 0 1 .5.7 1.2L15.6 15.8H7c-.8 0-1-.5-.7-1.2L10.2 7c.3-.5.6-.7 1-.7z" fill="#fff" stroke="#707070" stroke-width="1.2"/><path d="M16.2 16.6l2.8 3.2" stroke="#fff" stroke-width=".9"/></svg>
<div class="t" style="left:1096.60px;top:113px;font-size:15.5px;color:#2b2b2b;transform:scaleX(0.9177);transform-origin:0 0;">Shape Effects</div>
<svg class="a" style="left:1188.75px;top:118.20px" width="7.5" height="4.6" viewBox="0 0 7.5 4.6"><path d="M0 0H6.5L3.25 3.6Z" fill="#555"/></svg>
<svg class="a" style="left:1216px;top:55px;" width="20" height="21" viewBox="0 0 20 21"><circle cx="12" cy="9" r="6.2" fill="none" stroke="#4a7fba" stroke-width="1.8"/><path d="M7.5 13.5L2 19" stroke="#4a7fba" stroke-width="2.4" stroke-linecap="round"/></svg>
<div class="t" style="left:1239.70px;top:59px;font-size:15.5px;color:#2b2b2b;transform:scaleX(0.8890);transform-origin:0 0;">Find</div>
<div class="t" style="left:1216.80px;top:84px;font-size:10.5px;color:#555;transform:scaleX(1.0615);transform-origin:0 0;">a<span style="color:#8e4fb5">b</span></div>
<svg class="a" style="left:1215px;top:94px;" width="10" height="7" viewBox="0 0 10 7"><path d="M1 0v3.5h7M6 1.5l2 2-2 2" fill="none" stroke="#4a86c8" stroke-width="1.1"/></svg>
<div class="t" style="left:1224.60px;top:92.5px;font-size:10.5px;color:#555;transform:scaleX(0.9930);transform-origin:0 0;">a<span style="color:#4a86c8">c</span></div>
<div class="t" style="left:1239.70px;top:86px;font-size:15.5px;color:#2b2b2b;transform:scaleX(0.9124);transform-origin:0 0;">Replace</div>
<svg class="a" style="left:1301.75px;top:91.20px" width="7.5" height="4.6" viewBox="0 0 7.5 4.6"><path d="M0 0H6.5L3.25 3.6Z" fill="#555"/></svg>
<svg class="a" style="left:1220px;top:110px;" width="13" height="20" viewBox="0 0 13 20"><path d="M1.5 1.5v14.5l3.5-3.5 3 6 2.5-1.2-3-5.8h5z" fill="#fff" stroke="#6b6b6b" stroke-width="1" stroke-linejoin="round"/></svg>
<div class="t" style="left:1239.70px;top:113px;font-size:15.5px;color:#2b2b2b;transform:scaleX(0.9074);transform-origin:0 0;">Select</div>
<svg class="a" style="left:1282.75px;top:118.20px" width="7.5" height="4.6" viewBox="0 0 7.5 4.6"><path d="M0 0H6.5L3.25 3.6Z" fill="#555"/></svg>
<svg class="a" style="left:1338px;top:59px;" width="21" height="33" viewBox="0 0 21 33"><rect x="6" y="1.5" width="9" height="19.5" rx="4.5" fill="#4a7fba"/><path d="M2.5 13v2.5c0 4.5 3.5 8 8 8s8-3.5 8-8V13" fill="none" stroke="#808080" stroke-width="2"/><path d="M10.5 23.5v6M6.5 30.5h8" stroke="#808080" stroke-width="2.2"/></svg>
<div class="t" style="left:1324.80px;top:101px;font-size:15.5px;color:#2b2b2b;transform:scaleX(0.9659);transform-origin:0 0;">Dictate</div>
<svg class="a" style="left:1344.75px;top:126.20px" width="7.5" height="4.6" viewBox="0 0 7.5 4.6"><path d="M0 0H6.5L3.25 3.6Z" fill="#555"/></svg>
<svg class="a" style="left:1519px;top:146px;" width="13" height="8" viewBox="0 0 13 8"><path d="M1 7l5.5-5.5L12 7" fill="none" stroke="#666" stroke-width="1.3"/></svg>
<div class="a" style="left:1px;top:162px;width:1541px;height:43px;background:#e6e6e6;"></div>
<div class="t" style="left:13.25px;top:175px;font-size:15.5px;color:#a6a6a6;transform:scaleX(0.9274);transform-origin:0 0;">AutoSave</div>
<div class="a" style="left:83px;top:172px;width:47px;height:20px;background:transparent;border:1px solid #cfcfcf;border-radius:10px"></div>
<div class="a" style="left:88.5px;top:177.5px;width:9px;height:9px;background:#d0d0d0;border-radius:50%"></div>
<div class="t" style="left:106.60px;top:176px;font-size:13px;color:#c8c8c8;transform:scaleX(0.9400);transform-origin:0 0;">Off</div>
<svg class="a" style="left:150px;top:175px;" width="18" height="18" viewBox="0 0 18 18"><rect x="1" y="1" width="16" height="16" rx=".8" fill="#8a55b0"/><rect x="3" y="2.2" width="12" height="7.3" fill="#fff"/><rect x="5" y="12.2" width="7.5" height="4.8" fill="#fff"/><rect x="7.5" y="14" width="2.5" height="3" fill="#8a55b0"/></svg>
<svg class="a" style="left:186px;top:175px;" width="21" height="17" viewBox="0 0 21 17"><path d="M3.5 6.5h8.5c3.5 0 6 2.3 6 5s-2.5 4.5-5 4.5" fill="none" stroke="#4a7fba" stroke-width="2.6"/><path d="M0.8 6.5L6.8 1v11z" fill="#4a7fba"/></svg>
<svg class="a" style="left:212.75px;top:180.20px" width="7.5" height="4.6" viewBox="0 0 7.5 4.6"><path d="M0 0H6.5L3.25 3.6Z" fill="#555"/></svg>
<svg class="a" style="left:231px;top:175px;" width="20" height="19" viewBox="0 0 20 19"><path d="M9.5 2.3A6.8 6.8 0 1 0 15.3 5.8" fill="none" stroke="#4a7fba" stroke-width="2.6"/><path d="M8.8 0.2L18.2 1.8 11.8 7.2z" fill="#4a7fba"/></svg>
<svg class="a" style="left:266px;top:174px;" width="22" height="20" viewBox="0 0 22 20"><path d="M.5 1.7h19" stroke="#666" stroke-width="1.6"/><path d="M2.5 2.5v9.5h8" fill="none" stroke="#666" stroke-width="1.2"/><path d="M5 5h6M5 7.5h4" stroke="#999" stroke-width="1"/><path d="M10 12.5l-3 6h7z" fill="#fff" stroke="#666" stroke-width="1.1"/><circle cx="14.5" cy="9" r="4.8" fill="#fff" stroke="#666" stroke-width="1"/><path d="M13 6.3v5.4l4.3-2.7z" fill="#4a9e7f"/></svg>
<svg class="a" style="left:309px;top:180px;" width="7" height="8" viewBox="0 0 7 8"><path d="M0 .8h7" stroke="#555" stroke-width="1.2"/><path d="M0 3.5h7L3.5 7.5z" fill="#555"/></svg>
<div class="a" style="left:1px;top:205px;width:53px;height:856px;background:#e6e6e6;"></div>
<div class="a" style="left:51px;top:207px;width:1px;height:854px;background:#c6c6c6;"></div>
<svg class="a" style="left:21px;top:229px;" width="8" height="11" viewBox="0 0 8 11"><path d="M1.5 1.5l4.5 4-4.5 4" fill="none" stroke="#666" stroke-width="2.4"/></svg>
<div class="t" style="left:16px;top:334px;font-size:15px;color:#555;transform-origin:0 0;transform:rotate(-90deg) scaleX(0.985);">Thumbnails</div>
<div class="a" style="left:54px;top:205px;width:1467px;height:856px;background:#ffffff;"></div>
<div class="a" style="left:1521px;top:205px;width:20px;height:856px;background:#dadada;"></div>
<div class="a" style="left:1521px;top:205px;width:20px;height:2px;background:#e6e6e6;"></div>
<div class="a" style="left:1522px;top:207px;width:19px;height:19px;background:#fff;border:1px solid #c4c4c4"></div>
<svg class="a" style="left:1527px;top:213px;" width="10" height="6" viewBox="0 0 10 6"><path d="M0 5.5L4.5 .5 9 5.5z" fill="#6f6f6f"/></svg>
<div class="a" style="left:1522px;top:556px;width:19px;height:360px;background:#fff;border:1px solid #a8a8a8"></div>
<div class="a" style="left:1522px;top:1046px;width:19px;height:20px;background:#fff;border:1px solid #c4c4c4"></div>
<svg class="a" style="left:1527px;top:1052px;" width="10" height="6" viewBox="0 0 10 6"><path d="M0 .5h9L4.5 5.5z" fill="#6f6f6f"/></svg>
<div class="a" style="left:1541px;top:50px;width:1px;height:1011px;background:#e3ecef;"></div>
<div class="a" style="left:1542px;top:0px;width:1px;height:1061px;background:#b83a1c;"></div>
<div class="a" style="left:1543px;top:0px;width:2px;height:1061px;background:#b0b3b3;"></div>
<svg class="a" style="left:0;top:0" width="1545" height="1061" viewBox="0 0 1545 1061"><path d="M158 300.5H1521M158 528.5H1521M158.5 300V529" stroke="#a4a4a4" stroke-width="1" stroke-dasharray="2 1" fill="none"/><path d="M166 309H1521" stroke="#777777" stroke-width="2"/><path d="M166 520H1521" stroke="#777777" stroke-width="2"/><path d="M166 732H1521" stroke="#777777" stroke-width="2"/><path d="M166 943H1521" stroke="#777777" stroke-width="2"/><path d="M167 308V944" stroke="#777777" stroke-width="2"/><path d="M225 308V944" stroke="#777777" stroke-width="2"/><path d="M195.5 279V303M904.5 271V295" stroke="#a0a0a0" stroke-width="1"/><circle cx="159" cy="301" r="5.9" fill="#fff" stroke="#8c8c8c" stroke-width="2.1"/><circle cx="159" cy="415" r="5.9" fill="#fff" stroke="#8c8c8c" stroke-width="2.1"/><circle cx="159" cy="529" r="5.9" fill="#fff" stroke="#8c8c8c" stroke-width="2.1"/><circle cx="905" cy="301" r="5.9" fill="#fff" stroke="#8c8c8c" stroke-width="2.1"/><circle cx="905" cy="529" r="5.9" fill="#fff" stroke="#8c8c8c" stroke-width="2.1"/><circle cx="167" cy="309" r="5.9" fill="#fff" stroke="#8c8c8c" stroke-width="2.1"/><circle cx="196" cy="309" r="5.9" fill="#fff" stroke="#8c8c8c" stroke-width="2.1"/><circle cx="226" cy="309" r="5.9" fill="#fff" stroke="#8c8c8c" stroke-width="2.1"/><circle cx="167" cy="415" r="5.9" fill="#fff" stroke="#8c8c8c" stroke-width="2.1"/><circle cx="226" cy="415" r="5.9" fill="#fff" stroke="#8c8c8c" stroke-width="2.1"/><circle cx="167" cy="521" r="5.9" fill="#fff" stroke="#8c8c8c" stroke-width="2.1"/><circle cx="196" cy="521" r="5.9" fill="#fff" stroke="#8c8c8c" stroke-width="2.1"/><circle cx="226" cy="521" r="5.9" fill="#fff" stroke="#8c8c8c" stroke-width="2.1"/><g transform="translate(196.4 266.4)"><path d="M6.9 9.5A11.7 11.7 0 1 1 11.6 -1.4L18.5 -1.4L9.5 7.2L0.6 -1.4L7.25 -1.4A7.4 7.4 0 1 0 4.3 6.0Z" fill="none" stroke="#8c8c8c" stroke-width="2.1" stroke-linejoin="miter"/></g><g transform="translate(904.5 258.4)"><path d="M6.9 9.5A11.7 11.7 0 1 1 11.6 -1.4L18.5 -1.4L9.5 7.2L0.6 -1.4L7.25 -1.4A7.4 7.4 0 1 0 4.3 6.0Z" fill="none" stroke="#8c8c8c" stroke-width="2.1" stroke-linejoin="miter"/></g></svg>
<div class="a" style="left:230px;top:388px;width:150px;height:77px;background:#fff;border:1px solid #c6c6c6;box-shadow:1px 1px 3px rgba(0,0,0,.12)"></div>
<svg class="a" style="left:240px;top:395px;" width="140" height="35" viewBox="0 0 140 35"><path d="M19 5.5H10a2.5 2.5 0 0 0-2.5 2.5v13.5a2.5 2.5 0 0 0 2.5 2.5h3M25.8 11V8a2.5 2.5 0 0 0-2.5-2.5H19M25.8 21.5a2.5 2.5 0 0 1-2.5 2.5h-1" fill="none" stroke="#6b6b6b" stroke-width="1.1"/><path d="M29.5 9.5L21.5 19l2 2 6-8z" fill="#6b6b6b"/><path d="M11.5 27c2.5-1 5-4 7.5-6 2.2-1.8 4.5-.5 4 1.5-.7 2.5-5 4.5-11.5 4.5z" fill="#4a7fba"/><path d="M19 21c1.8-1 4.3.3 3.8 2" fill="none" stroke="#fff" stroke-width="1"/><path d="M55 14.3l7.5-7.5 7.7 7.7-7.7 7.5z" fill="#fff" stroke="#6b6b6b" stroke-width="1.1"/><path d="M64.3 10.2V5.5c0-2.2-3-2.2-3 0v4" fill="none" stroke="#6b6b6b" stroke-width="1.1"/><circle cx="64.3" cy="10.5" r="1.3" fill="#6b6b6b"/><path d="M67.5 8.9c3 .2 5.5 2 5.5 4.5-.3 2-1.7 4.2-2.8 6.8-.3-2.5-.9-5-2.5-7.5z" fill="#4a86c8"/><rect x="48.5" y="23.5" width="29" height="6" fill="#fff" stroke="#8a8a8a" stroke-width="1.1"/><path d="M116 4.8H99.5v15H106" fill="none" stroke="#6b6b6b" stroke-width="1.1"/><path d="M120 5.5L107 18.5l-1.5 2.5 2.8-1L121.5 7z" fill="#4a7fba" stroke="#4a7fba" stroke-width="1.5"/><path d="M117.8 6.8l2 2" stroke="#fff" stroke-width="1"/><rect x="96" y="23" width="30" height="7" fill="#4472c4"/></svg>
<svg class="a" style="left:273.25px;top:408.20px" width="6.5" height="4.6" viewBox="0 0 6.5 4.6"><path d="M0 0H5.5L2.75 3.6Z" fill="#555"/></svg>
<svg class="a" style="left:319.25px;top:408.20px" width="6.5" height="4.6" viewBox="0 0 6.5 4.6"><path d="M0 0H5.5L2.75 3.6Z" fill="#555"/></svg>
<svg class="a" style="left:367.25px;top:408.20px" width="6.5" height="4.6" viewBox="0 0 6.5 4.6"><path d="M0 0H5.5L2.75 3.6Z" fill="#555"/></svg>
<div class="t" style="left:243.00px;top:437px;font-size:12px;color:#444;transform:scaleX(0.9936);transform-origin:0 0;">Style</div>
<div class="t" style="left:295.40px;top:437px;font-size:12px;color:#444;transform:scaleX(0.9132);transform-origin:0 0;">Fill</div>
<div class="t" style="left:330.60px;top:437px;font-size:12px;color:#444;transform:scaleX(1.0497);transform-origin:0 0;">Outline</div>
<div class="a" style="left:230px;top:484px;width:223px;height:573px;background:#fff;border:1px solid #c6c6c6;box-shadow:2px 2px 4px rgba(0,0,0,.13)"></div>
<div class="a" style="left:261px;top:546px;width:190px;height:27px;background:#e8e8e8;"></div>
<div class="t" style="left:270.20px;top:552px;font-size:15.5px;color:#555;transform:scaleX(0.9169);transform-origin:0 0;font-weight:bold;">Paste Options:</div>
<div class="a" style="left:231px;top:612px;width:221px;height:33px;background:#c9c1b4;border:3px solid #d04423"></div>
<div class="t" style="left:269.30px;top:622px;font-size:15.5px;color:#262626;transform:scaleX(0.9718);transform-origin:0 0;">Edit Te<span style="text-decoration:underline;text-decoration-thickness:1px;text-underline-offset:1.5px">x</span>t</div>
<div class="t" style="left:269.30px;top:494px;font-size:15.5px;color:#444;transform:scaleX(0.8920);transform-origin:0 0;">Cu<span style="text-decoration:underline;text-decoration-thickness:1px;text-underline-offset:1.5px">t</span></div>
<div class="t" style="left:269.30px;top:524px;font-size:15.5px;color:#444;transform:scaleX(0.9311);transform-origin:0 0;"><span style="text-decoration:underline;text-decoration-thickness:1px;text-underline-offset:1.5px">C</span>opy</div>
<div class="t" style="left:269.30px;top:652px;font-size:15.5px;color:#444;transform:scaleX(0.9380);transform-origin:0 0;"><span style="text-decoration:underline;text-decoration-thickness:1px;text-underline-offset:1.5px">E</span>dit Points</div>
<div class="t" style="left:269.30px;top:685px;font-size:15.5px;color:#444;transform:scaleX(0.9306);transform-origin:0 0;"><span style="text-decoration:underline;text-decoration-thickness:1px;text-underline-offset:1.5px">G</span>roup</div>
<div class="t" style="left:269.30px;top:715px;font-size:15.5px;color:#444;transform:scaleX(0.9649);transform-origin:0 0;">Bring to F<span style="text-decoration:underline;text-decoration-thickness:1px;text-underline-offset:1.5px">r</span>ont</div>
<div class="t" style="left:269.30px;top:745px;font-size:15.5px;color:#444;transform:scaleX(0.9368);transform-origin:0 0;">Send to Bac<span style="text-decoration:underline;text-decoration-thickness:1px;text-underline-offset:1.5px">k</span></div>
<div class="t" style="left:269.30px;top:777px;font-size:15.5px;color:#444;transform:scaleX(0.9199);transform-origin:0 0;">L<span style="text-decoration:underline;text-decoration-thickness:1px;text-underline-offset:1.5px">i</span>nk</div>
<div class="t" style="left:269.30px;top:811px;font-size:15.5px;color:#444;transform:scaleX(0.9483);transform-origin:0 0;">Smart <span style="text-decoration:underline;text-decoration-thickness:1px;text-underline-offset:1.5px">L</span>ookup</div>
<div class="t" style="left:269.30px;top:843px;font-size:15.5px;color:#444;transform:scaleX(0.8759);transform-origin:0 0;"><span style="text-decoration:underline;text-decoration-thickness:1px;text-underline-offset:1.5px">S</span>ave as Picture...</div>
<div class="t" style="left:269.30px;top:877px;font-size:15.5px;color:#444;transform:scaleX(0.9305);transform-origin:0 0;">Tran<span style="text-decoration:underline;text-decoration-thickness:1px;text-underline-offset:1.5px">s</span>late</div>
<div class="t" style="left:269.30px;top:909px;font-size:15.5px;color:#444;transform:scaleX(0.9603);transform-origin:0 0;">Edit <span style="text-decoration:underline;text-decoration-thickness:1px;text-underline-offset:1.5px">A</span>lt Text...</div>
<div class="t" style="left:269.30px;top:940px;font-size:15.5px;color:#444;transform:scaleX(0.9512);transform-origin:0 0;">Set as <span style="text-decoration:underline;text-decoration-thickness:1px;text-underline-offset:1.5px">D</span>efault Text Box</div>
<div class="t" style="left:269.30px;top:970px;font-size:15.5px;color:#444;transform:scaleX(0.9203);transform-origin:0 0;">Si<span style="text-decoration:underline;text-decoration-thickness:1px;text-underline-offset:1.5px">z</span>e and Position...</div>
<div class="t" style="left:269.30px;top:999px;font-size:15.5px;color:#444;transform:scaleX(0.9025);transform-origin:0 0;">F<span style="text-decoration:underline;text-decoration-thickness:1px;text-underline-offset:1.5px">o</span>rmat Shape...</div>
<div class="t" style="left:269.30px;top:1033px;font-size:15.5px;color:#444;transform:scaleX(0.9601);transform-origin:0 0;">New Co<span style="text-decoration:underline;text-decoration-thickness:1px;text-underline-offset:1.5px">m</span>ment</div>
<div class="a" style="left:271px;top:611px;width:180px;height:1px;background:#e1e1e1;"></div>
<div class="a" style="left:271px;top:674px;width:180px;height:1px;background:#e1e1e1;"></div>
<div class="a" style="left:271px;top:767px;width:180px;height:1px;background:#e1e1e1;"></div>
<div class="a" style="left:271px;top:800px;width:180px;height:1px;background:#e1e1e1;"></div>
<div class="a" style="left:271px;top:833px;width:180px;height:1px;background:#e1e1e1;"></div>
<div class="a" style="left:271px;top:866px;width:180px;height:1px;background:#e1e1e1;"></div>
<div class="a" style="left:271px;top:899px;width:180px;height:1px;background:#e1e1e1;"></div>
<div class="a" style="left:271px;top:1022px;width:180px;height:1px;background:#e1e1e1;"></div>
<svg class="a" style="left:433px;top:687px;" width="5" height="9" viewBox="0 0 5 9"><path d="M0 0v8.5l4.5-4.25z" fill="#555"/></svg>
<svg class="a" style="left:433px;top:718px;" width="5" height="9" viewBox="0 0 5 9"><path d="M0 0v8.5l4.5-4.25z" fill="#555"/></svg>
<svg class="a" style="left:433px;top:748px;" width="5" height="9" viewBox="0 0 5 9"><path d="M0 0v8.5l4.5-4.25z" fill="#555"/></svg>
<svg class="a" style="left:433px;top:781px;" width="5" height="9" viewBox="0 0 5 9"><path d="M0 0v8.5l4.5-4.25z" fill="#555"/></svg>
<div class="a" style="left:422px;top:714px;width:1px;height:15.5px;background:#e1e1e1;"></div>
<div class="a" style="left:422px;top:744px;width:1px;height:15.5px;background:#e1e1e1;"></div>
<div class="a" style="left:422px;top:777px;width:1px;height:15.5px;background:#e1e1e1;"></div>
<svg class="a" style="left:236px;top:490px;" width="18" height="20" viewBox="0 0 18 20"><path d="M4.5 1l8 12.5M13.5 1l-8 12.5" stroke="#6b6b6b" stroke-width="1.5"/><circle cx="4.2" cy="15.8" r="2.8" fill="none" stroke="#4a86c8" stroke-width="1.3"/><circle cx="13.8" cy="15.8" r="2.8" fill="none" stroke="#4a86c8" stroke-width="1.3"/></svg>
<svg class="a" style="left:236px;top:520px;" width="19" height="20" viewBox="0 0 19 20"><path d="M1.5 1.5h6.5l2 2v9.5h-8.5z" fill="#fff" stroke="#6b6b6b"/><path d="M7.5 6.5h6.5l3 3v9.5h-9.5z" fill="#fff" stroke="#6b6b6b"/><path d="M3 4.5h4M3 7h4M3 9.5h4M9.5 11.5h5.5M9.5 14h5.5M9.5 16.5h5.5" stroke="#4a86c8" stroke-width=".9"/></svg>
<svg class="a" style="left:236px;top:548px;" width="21" height="23" viewBox="0 0 21 23"><rect x="1" y="3" width="15" height="18.5" rx="1" fill="#ecc67c"/><path d="M4 2.5h9v3.5H4z" fill="#6b6b6b"/><rect x="7" y=".5" width="3" height="2.5" fill="#6b6b6b"/><path d="M10.5 10.5h6l3 3v9h-9z" fill="#fff" stroke="#6b6b6b"/></svg>
<svg class="a" style="left:271px;top:581px;" width="21" height="23" viewBox="0 0 21 23"><rect x="1" y="3" width="15" height="18.5" rx="1" fill="#ecc67c"/><path d="M4 2.5h9v3.5H4z" fill="#6b6b6b"/><rect x="7" y=".5" width="3" height="2.5" fill="#6b6b6b"/><path d="M10.5 10.5h6l3 3v9h-9z" fill="#fff" stroke="#6b6b6b"/></svg>
<svg class="a" style="left:308px;top:581px;" width="23" height="24" viewBox="0 0 23 24"><rect x="1" y="3" width="15" height="18.5" rx="1" fill="none" stroke="#ecc67c" stroke-width="2"/><path d="M4 2.5h9v3.5H4z" fill="#6b6b6b"/><rect x="7" y=".5" width="3" height="2.5" fill="#6b6b6b"/><rect x="8.5" y="10.5" width="13" height="12.5" fill="#fff" stroke="#6b6b6b"/><path d="M10 21.5l3.5-4.5 2.5 2.5 1.5-1.5 2.5 3.5z" fill="#4a86c8"/><circle cx="18.5" cy="13.8" r="1.2" fill="#ecc67c"/></svg>
<svg class="a" style="left:235px;top:619px;" width="21" height="18" viewBox="0 0 21 18"><rect x="1.5" y="1.5" width="18" height="15" fill="#fdf6e3" stroke="#666" stroke-width="1"/><text x="3.5" y="9" font-size="7" font-weight="bold" fill="#4a86c8" font-family="Liberation Sans">A</text><path d="M10 5h7M10 8h7M4 11h13M4 14h13" stroke="#999" stroke-width=".9"/></svg>
<svg class="a" style="left:230px;top:640px;" width="35" height="65" viewBox="0 0 35 65"><path d="M17.2 10.4L21.8 10.4M7.4 18.1L7.4 21.8M10.1 24.5L21.8 24.5" stroke="#6b6b6b" stroke-width="1.1"/><path d="M7.7 12.6L12.0 10.1M19.6 16.0L23.6 13.2M20.2 19.3L23.9 21.5" stroke="#888" stroke-width=".9" stroke-dasharray="1 1"/><rect x="12.8" y="8.8" width="3.2" height="3.2" fill="#3a78b9"/><rect x="22.9" y="8.8" width="3.2" height="3.2" fill="#3a78b9"/><rect x="5.8" y="13.7" width="3.2" height="3.2" fill="#3a78b9"/><rect x="15.9" y="16.8" width="3.2" height="3.2" fill="#3a78b9"/><rect x="5.8" y="22.9" width="3.2" height="3.2" fill="#3a78b9"/><rect x="22.9" y="22.9" width="3.2" height="3.2" fill="#3a78b9"/><path d="M11.3 42.3L19.6 42.3L19.6 54.6L7.4 54.6L7.4 46.3M12.3 47.5L24.8 47.5L24.8 55.8M12.6 47.5L12.6 59.5L20.9 59.5" fill="none" stroke="#6b6b6b" stroke-width="1.1"/><rect x="7.0" y="42.0" width="3.2" height="3.2" fill="#3a78b9"/><rect x="22.0" y="42.0" width="3.2" height="3.2" fill="#3a78b9"/><rect x="7.0" y="57.0" width="3.2" height="3.2" fill="#3a78b9"/><rect x="22.0" y="57.0" width="3.2" height="3.2" fill="#3a78b9"/></svg>
<svg class="a" style="left:236px;top:712px;" width="19" height="17" viewBox="0 0 19 17"><path d="M2.5 5V1.5H6M16.5 12v3.5H13" fill="none" stroke="#555" stroke-width="1"/><rect x="4.5" y="3.5" width="10" height="10" fill="#ecc67c"/></svg>
<svg class="a" style="left:235px;top:740px;" width="22" height="21" viewBox="0 0 22 21"><rect x="5" y="5" width="11" height="11" fill="#ecc67c"/><rect x="1.5" y="1.5" width="7" height="7" fill="#fff" stroke="#555" stroke-width="1"/><rect x="12.5" y="12.5" width="7.5" height="7.5" fill="#fff" stroke="#555" stroke-width="1"/></svg>
<svg class="a" style="left:236px;top:774px;" width="21" height="21" viewBox="0 0 21 21"><circle cx="8.5" cy="7.5" r="6.8" fill="#fff" stroke="#777" stroke-width="1"/><path d="M1.8 7.5h13.4M8.5 .8v13.4M2.8 4h11.4M2.8 11h11.4M6 1.2c-2.2 4-2.2 8.6 0 12.6M11 1.2c2.2 4 2.2 8.6 0 12.6" fill="none" stroke="#777" stroke-width=".8"/><rect x="4.5" y="13.5" width="8.5" height="5.5" rx="2.75" fill="none" stroke="#3a78b9" stroke-width="1.8"/><rect x="10" y="13.5" width="9" height="5.5" rx="2.75" fill="none" stroke="#3a78b9" stroke-width="1.8"/></svg>
<svg class="a" style="left:236px;top:807px;" width="20" height="20" viewBox="0 0 20 20"><circle cx="11.5" cy="7.8" r="6.3" fill="#fff" stroke="#3a78b9" stroke-width="1.7"/><path d="M7 12.5L2 17.5" stroke="#3a78b9" stroke-width="2.6" stroke-linecap="round"/><circle cx="11.5" cy="4.8" r="1" fill="#444"/><path d="M11.5 6.8v4.2" stroke="#444" stroke-width="1.6"/></svg>
<svg class="a" style="left:230px;top:870px;" width="35" height="65" viewBox="0 0 35 65"><path d="M7.98 6.13L15.03 7.24L12.27 8.90L14.72 11.66L7.98 11.66Z" fill="#1a7ad8"/><text x="7.98" y="20.74" font-size="11.5" fill="#1a7ad8" font-family="Liberation Sans" style="transform:scaleX(1.05)">a</text><text x="15.34" y="13.37" font-size="10" font-weight="bold" fill="#1e8a1e" font-family="Liberation Serif">あ</text><path d="M23.01 20.55L16.07 19.75L18.71 17.91L16.26 15.34L23.01 15.34Z" fill="#1e8a1e"/><rect x="7.67" y="37.55" width="16.87" height="16.69" fill="#fff" stroke="#6b6b6b" stroke-width="1.1"/><path d="M9.20 52.76L9.20 48.77L12.58 45.40L17.79 49.69L17.18 47.55L18.40 46.32L22.70 49.69L12.88 52.76Z" fill="#4a7fba"/><circle cx="19.63" cy="41.41" r="1.7" fill="#e8b25c"/><rect x="13.50" y="51.53" width="11.96" height="3.99" fill="#fff" stroke="#6b6b6b" stroke-width="1.1"/><path d="M15.34 53.50L23.62 53.50" stroke="#999" stroke-width="1"/></svg>
<svg class="a" style="left:230px;top:960px;" width="35" height="30" viewBox="0 0 35 30"><path d="M9.97 8.49L9.97 11.70M9.97 18.37L9.97 21.66" stroke="#3a78b9" stroke-width="2.6"/><path d="M6.76 9.71L9.97 5.89L13.17 9.71Z M6.76 20.62L9.97 24.70L13.17 20.62Z" fill="#3a78b9"/><rect x="8.49" y="13.69" width="4.33" height="3.81" fill="#fff" stroke="#6b6b6b" stroke-width="1.1"/><path d="M13.00 6.24L18.37 6.24M13.00 24.44L18.37 24.44" stroke="#777" stroke-width="1" stroke-dasharray="1 1.5"/><rect x="19.50" y="6.50" width="5.20" height="17.76" fill="#fff" stroke="#6b6b6b" stroke-width="1.1"/></svg>
<svg class="a" style="left:230px;top:960px;" width="35" height="92" viewBox="0 0 35 92"><path d="M6.24 43.76L11.27 38.56L17.33 44.37L11.87 49.22Z" fill="#fff" stroke="#6b6b6b" stroke-width="1.1"/><path d="M12.82 42.89L12.82 38.13C12.82 35.53 9.10 35.53 9.10 38.13L9.10 40.73" fill="none" stroke="#6b6b6b" stroke-width="1.1"/><path d="M15.60 41.42C19.50 41.42 21.23 44.19 20.36 46.36L18.63 48.96C18.37 46.79 17.33 44.63 16.03 43.33Z" fill="#4a7fba"/><path d="M26.00 42.29L26.00 46.36L21.23 51.13L19.24 49.13Z" fill="#6b6b6b"/><path d="M19.50 49.22L21.23 50.95" stroke="#fff" stroke-width=".9"/><path d="M11.09 55.63C13.86 53.29 15.60 50.69 17.76 50.09C19.93 49.57 21.23 51.99 19.50 53.73C17.76 55.46 14.73 55.63 11.09 55.63Z" fill="#4a7fba"/><path d="M15.16 71.23L22.96 71.23Q24.70 71.23 24.70 72.96L24.70 80.16Q24.70 81.89 22.96 81.89L14.73 81.89L11.27 86.22L10.83 81.89Q7.37 81.89 7.37 80.16L7.37 76.26" fill="none" stroke="#6b6b6b" stroke-width="1.1" stroke-linejoin="round"/><path d="M9.97 69.32L9.97 76.69M6.07 72.96L13.86 72.96" stroke="#3f9a7a" stroke-width="2.6"/></svg>
</body></html>
